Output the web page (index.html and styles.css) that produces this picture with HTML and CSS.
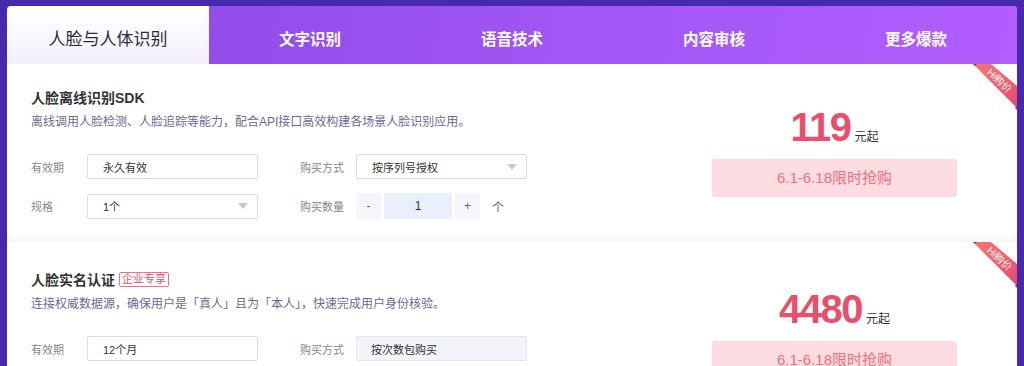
FILE: index.html
```html
<!DOCTYPE html>
<html lang="zh-CN">
<head>
    <meta charset="UTF-8">
    <meta name="viewport" content="width=device-width, initial-scale=1.0">
    <title>AI 特惠专区</title>
    <link rel="stylesheet" href="styles.css">
</head>
<body>
    <div class="panel">
        <div class="tabs">
            <div class="tab active">人脸与人体识别</div>
            <div class="tab">文字识别</div>
            <div class="tab">语音技术</div>
            <div class="tab">内容审核</div>
            <div class="tab">更多爆款</div>
        </div>

        <!-- 人脸离线识别SDK -->
        <div class="card">
            <div class="ribbon">
                <svg width="44" height="46" viewBox="0 0 44 46">
                    <defs>
                        <linearGradient id="rg1" x1="0" y1="0" x2="1" y2="1">
                            <stop offset="0" stop-color="#f47a72"/>
                            <stop offset="1" stop-color="#e8496b"/>
                        </linearGradient>
                    </defs>
                    <polygon points="0,0 18,0 44,22 44,44" fill="url(#rg1)"/>
                    <polygon points="0,0 4,0 2,2" fill="#b8323f"/>
                    <polygon points="42,44 44,41 44,46" fill="#b8323f"/>
                </svg>
                <span class="ribbon-text">Hi购价</span>
            </div>
            <div class="card-info">
                <div class="card-title">人脸离线识别SDK</div>
                <div class="card-desc">离线调用人脸检测、人脸追踪等能力，配合API接口高效构建各场景人脸识别应用。</div>
                <div class="form-row">
                    <div class="field">
                        <span class="label">有效期</span>
                        <div class="control">永久有效</div>
                    </div>
                    <div class="field">
                        <span class="label">购买方式</span>
                        <div class="control select">按序列号授权<span class="caret"></span></div>
                    </div>
                </div>
                <div class="form-row">
                    <div class="field">
                        <span class="label">规格</span>
                        <div class="control select">1个<span class="caret"></span></div>
                    </div>
                    <div class="field">
                        <span class="label">购买数量</span>
                        <div class="stepper">
                            <span class="step-btn">-</span>
                            <span class="step-value">1</span>
                            <span class="step-btn">+</span>
                            <span class="unit">个</span>
                        </div>
                    </div>
                </div>
            </div>
            <div class="card-price">
                <div class="price"><span class="num">119</span><span class="suffix">元起</span></div>
                <div class="promo">6.1-6.18限时抢购</div>
            </div>
        </div>

        <div class="divider"></div>

        <!-- 人脸实名认证 -->
        <div class="card card-next">
            <div class="ribbon">
                <svg width="44" height="46" viewBox="0 0 44 46">
                    <defs>
                        <linearGradient id="rg2" x1="0" y1="0" x2="1" y2="1">
                            <stop offset="0" stop-color="#f47a72"/>
                            <stop offset="1" stop-color="#e8496b"/>
                        </linearGradient>
                    </defs>
                    <polygon points="0,0 18,0 44,22 44,44" fill="url(#rg2)"/>
                    <polygon points="0,0 4,0 2,2" fill="#b8323f"/>
                    <polygon points="42,44 44,41 44,46" fill="#b8323f"/>
                </svg>
                <span class="ribbon-text">Hi购价</span>
            </div>
            <div class="card-info">
                <div class="card-title">人脸实名认证 <span class="tag">企业专享</span></div>
                <div class="card-desc">连接权威数据源，确保用户是「真人」且为「本人」，快速完成用户身份核验。</div>
                <div class="form-row">
                    <div class="field">
                        <span class="label">有效期</span>
                        <div class="control">12个月</div>
                    </div>
                    <div class="field">
                        <span class="label">购买方式</span>
                        <div class="control disabled">按次数包购买</div>
                    </div>
                </div>
            </div>
            <div class="card-price">
                <div class="price"><span class="num">4480</span><span class="suffix">元起</span></div>
                <div class="promo">6.1-6.18限时抢购</div>
            </div>
        </div>
    </div>
</body>
</html>
```

FILE: styles.css
```css
html, body {
    overflow: hidden;
}
body {
    margin: 0;
    padding: 6px 7px 0 7px;
    background-color: #4729ad;
    font-family: "Liberation Sans", "Noto Sans CJK SC", sans-serif;
    color: #333;
}
.panel {
    background: #fff;
    border-radius: 4px 4px 0 0;
    overflow: hidden;
}
.tabs {
    display: flex;
    height: 58px;
    background: linear-gradient(100deg, #8847e4 0%, #a357f6 60%, #b25dff 100%);
}
.tab {
    flex: 1;
    display: flex;
    align-items: center;
    justify-content: center;
    padding-top: 5px;
    box-sizing: border-box;
    color: #fff;
    font-size: 15.5px;
    font-weight: bold;
}
.tab.active {
    background: linear-gradient(#ffffff, #f3f0fb);
    color: #2c2c3a;
    font-size: 17px;
    font-weight: normal;
    border-radius: 4px 0 0 0;
}
.card {
    position: relative;
    display: flex;
    padding: 23px 0 15px 24px;
    background: #fff;
}
.card-next {
    padding-top: 27px;
}
.divider {
    height: 8px;
    background: linear-gradient(#fbfbfc, #f6f6f9);
}
.card-info {
    flex: 1;
}
.card-title {
    display: flex;
    align-items: center;
    height: 20px;
    font-size: 14px;
    font-weight: bold;
    color: #333;
}
.tag {
    margin-left: 4px;
    padding: 0 2px;
    height: 13px;
    line-height: 13px;
    border: 1px solid #f0728a;
    border-radius: 2px;
    font-size: 11px;
    font-weight: normal;
    color: #e8506a;
}
.card-desc {
    margin-top: 5px;
    height: 20px;
    line-height: 20px;
    font-size: 12px;
    color: #6d6796;
}
.form-row {
    display: flex;
    gap: 42px;
    margin-top: 14px;
}
.card-desc + .form-row {
    margin-top: 22px;
}
.field {
    display: flex;
    align-items: center;
}
.label {
    width: 56px;
    font-size: 11px;
    color: #888;
}
.control {
    display: flex;
    align-items: center;
    justify-content: space-between;
    width: 171px;
    height: 25px;
    box-sizing: border-box;
    padding: 0 9px 0 15px;
    border: 1px solid #d9dce6;
    border-radius: 2px;
    font-size: 11px;
    color: #333;
}
.control.disabled {
    background: #f3f4f8;
    border-color: #e3e5ec;
    padding-left: 14px;
}
.caret {
    width: 0;
    height: 0;
    border-left: 5px solid transparent;
    border-right: 5px solid transparent;
    border-top: 6px solid #c4c7d0;
}
.stepper {
    display: flex;
    align-items: center;
    gap: 3px;
    height: 26px;
    font-size: 12px;
}
.step-btn {
    width: 25px;
    height: 26px;
    line-height: 26px;
    text-align: center;
    background: #f4f6fb;
    color: #666;
}
.step-value {
    width: 68px;
    height: 26px;
    line-height: 26px;
    text-align: center;
    background: #e9effb;
    color: #333;
}
.unit {
    margin-left: 9px;
    color: #666;
}
.card-price {
    width: 245px;
    margin: 16px 60px 0 0;
}
.price {
    display: flex;
    align-items: baseline;
    justify-content: center;
    height: 48px;
}
.num {
    font-size: 40px;
    line-height: 48px;
    font-weight: bold;
    letter-spacing: -1.5px;
    color: #e94f6b;
}
.suffix {
    margin-left: 4px;
    font-size: 12px;
    color: #333;
}
.promo {
    margin-top: 8px;
    height: 38px;
    line-height: 38px;
    text-align: center;
    background: #fddde1;
    border-radius: 2px;
    font-size: 15px;
    color: #ef6f7f;
}
.ribbon {
    position: absolute;
    top: 0;
    right: 0;
    width: 44px;
    height: 46px;
}
.ribbon svg {
    display: block;
}
.ribbon-text {
    position: absolute;
    left: 6px;
    top: 11px;
    width: 40px;
    line-height: 12px;
    text-align: center;
    font-size: 10px;
    color: #fff;
    transform: rotate(43deg);
}
```
